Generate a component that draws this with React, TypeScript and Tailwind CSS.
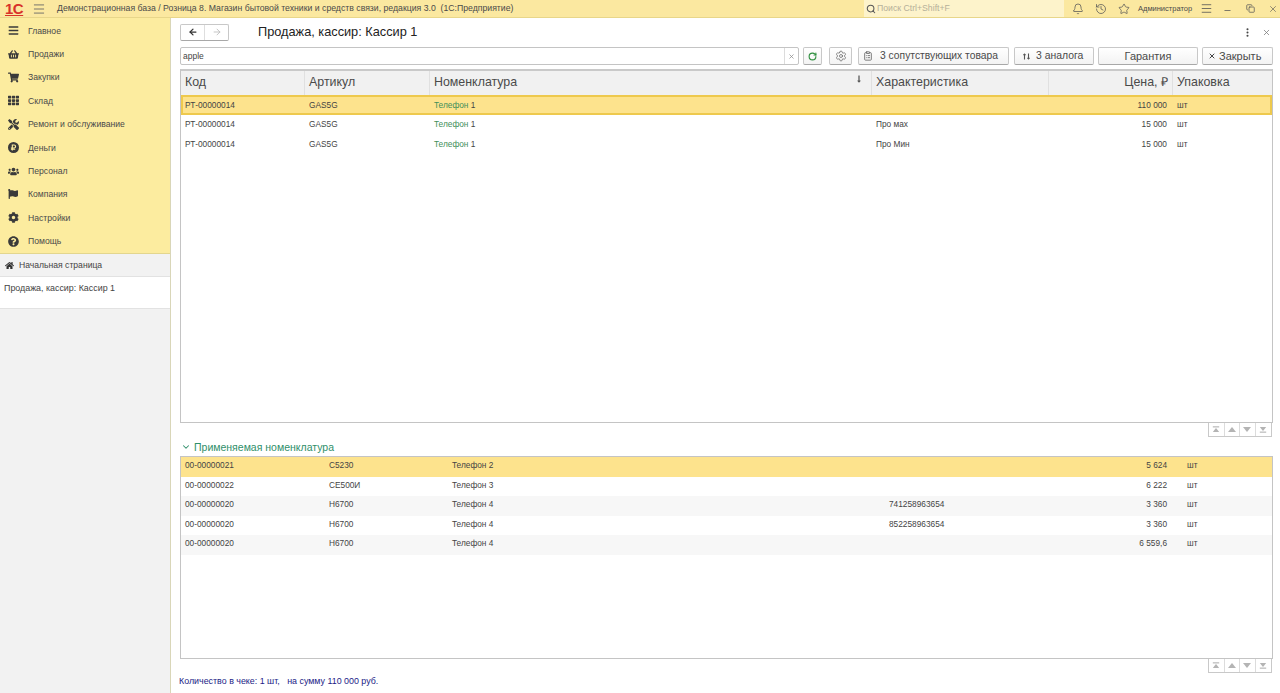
import { Bell, History, Star, Search, Menu, Minus, Copy, X, ArrowLeft, ArrowRight, RotateCw, Settings, ClipboardList, ChevronDown, EllipsisVertical } from "lucide-react"
import { FaBars, FaShoppingBasket, FaShoppingCart, FaTh, FaTools, FaRubleSign, FaUsers, FaFlag, FaCog, FaQuestionCircle, FaHome, FaLongArrowAltDown, FaLongArrowAltUp } from "react-icons/fa"

function MoneyIcon() {
  return (
    <span className="w-[11px] h-[11px] rounded-full bg-[#3a3a3a] flex items-center justify-center">
      <FaRubleSign size={7} className="text-[#fcec9f]" />
    </span>
  )
}

const menu = [
  { label: "Главное", icon: <FaBars size={11} /> },
  { label: "Продажи", icon: <FaShoppingBasket size={11} /> },
  { label: "Закупки", icon: <FaShoppingCart size={11} /> },
  { label: "Склад", icon: <FaTh size={11} /> },
  { label: "Ремонт и обслуживание", icon: <FaTools size={11} /> },
  { label: "Деньги", icon: <MoneyIcon /> },
  { label: "Персонал", icon: <FaUsers size={11} /> },
  { label: "Компания", icon: <FaFlag size={10} /> },
  { label: "Настройки", icon: <FaCog size={11} /> },
  { label: "Помощь", icon: <FaQuestionCircle size={11} /> },
]

const topRows = [
  { code: "РТ-00000014", art: "GAS5G", name: "Телефон", num: "1", ch: "", price: "110 000" },
  { code: "РТ-00000014", art: "GAS5G", name: "Телефон", num: "1", ch: "Про мах", price: "15 000" },
  { code: "РТ-00000014", art: "GAS5G", name: "Телефон", num: "1", ch: "Про Мин", price: "15 000" },
]

const bottomRows = [
  { code: "00-00000021", art: "C5230", name: "Телефон 2", ch: "", price: "5 624" },
  { code: "00-00000022", art: "CE500И", name: "Телефон 3", ch: "", price: "6 222" },
  { code: "00-00000020", art: "H6700", name: "Телефон 4", ch: "741258963654", price: "3 360" },
  { code: "00-00000020", art: "H6700", name: "Телефон 4", ch: "852258963654", price: "3 360" },
  { code: "00-00000020", art: "H6700", name: "Телефон 4", ch: "", price: "6 559,6" },
]

function Pager() {
  return (
    <div className="flex justify-end h-[15px]">
      <div className="flex h-[14px] mr-px border border-t-0 border-[#c9c9c9] divide-x divide-[#dcdcdc]">
        <span className="w-[15.5px] flex items-center justify-center">
          <svg width="8" height="7" viewBox="0 0 10 8" fill="#b4b4b4"><rect x="1" y="0" width="8" height="1.4" /><path d="M5 2 9 7H1z" /></svg>
        </span>
        <span className="w-[15.5px] flex items-center justify-center">
          <svg width="8" height="5" viewBox="0 0 10 6" fill="#b4b4b4"><path d="M5 0 10 6H0z" /></svg>
        </span>
        <span className="w-[15.5px] flex items-center justify-center">
          <svg width="8" height="5" viewBox="0 0 10 6" fill="#b4b4b4"><path d="M5 6 10 0H0z" /></svg>
        </span>
        <span className="w-[15.5px] flex items-center justify-center">
          <svg width="8" height="7" viewBox="0 0 10 8" fill="#b4b4b4"><path d="M5 6 9 1H1z" /><rect x="1" y="6.6" width="8" height="1.4" /></svg>
        </span>
      </div>
    </div>
  )
}

function Btn({ children, className }: { children: React.ReactNode; className: string }) {
  return (
    <div className={"h-[18px] shrink-0 flex items-center whitespace-nowrap rounded-[2px] border border-[#c8c8c8] border-b-[#a8a8a8] bg-gradient-to-b from-white to-[#f3f3f3] text-[#4a4a4a] " + className}>
      {children}
    </div>
  )
}

export default function App() {
  return (
    <div className="w-[1280px] h-[693px] overflow-hidden flex flex-col bg-white text-[#444] font-['Liberation_Sans',Arial,sans-serif]">
      {/* title bar */}
      <div className="h-[18px] shrink-0 flex items-center bg-[#fbe8a0] border-b border-[#e8d68a] text-[8.7px] text-[#4a4a4a]">
        <div className="w-[29px] pl-[5px] text-[15px] leading-none font-bold tracking-[-0.5px] text-[#d8322a] underline decoration-1 underline-offset-1">1С</div>
        <Menu size={14} strokeWidth={1.5} className="ml-[3px] text-[#666]" />
        <div className="ml-[11px] w-[807px] whitespace-nowrap">Демонстрационная база / Розница 8. Магазин бытовой техники и средств связи, редакция 3.0&nbsp; (1С:Предприятие)</div>
        <div className="w-[200px] h-full flex items-center gap-px pl-[2px] bg-[#fdf3cb] text-[#b5b09a]">
          <Search size={10} strokeWidth={2.5} className="text-[#555]" />
          Поиск Ctrl+Shift+F
        </div>
        <Bell size={12} strokeWidth={1.5} className="ml-[8px] text-[#555]" />
        <History size={12} strokeWidth={1.5} className="ml-[11px] text-[#555]" />
        <Star size={12} strokeWidth={1.5} className="ml-[11px] text-[#555]" />
        <div className="ml-[8px] w-[55px] text-[7.5px] whitespace-nowrap">Администратор</div>
        <Menu size={13} strokeWidth={1.5} className="ml-[7px] text-[#555]" />
        <Minus size={9} className="ml-[10px] mt-[4px] text-[#555]" />
        <Copy size={9} strokeWidth={2} className="ml-[14px] text-[#555]" />
        <X size={10} strokeWidth={1.5} className="ml-[13px] text-[#555]" />
      </div>

      <div className="flex-1 flex min-h-0">
        {/* left panel */}
        <div className="w-[171px] shrink-0 flex flex-col bg-[#f2f2f2] border-r border-[#d9d6b8]">
          <div className="h-[236px] shrink-0 flex flex-col pt-[1px] bg-[#fcec9f] border-b border-[#e3d68e] text-[8.65px] text-[#4a4a4a]">
            {menu.map(({ label, icon }) => (
              <div key={label} className="h-[23.4px] flex items-center">
                <span className="w-[28px] pl-[8px] text-[#3a3a3a] shrink-0">{icon}</span>
                <span className="whitespace-nowrap pt-[1px]">{label}</span>
              </div>
            ))}
          </div>
          <div className="h-[23px] shrink-0 flex items-center gap-[5px] pl-[5px] border-b border-[#e2e2e2] text-[8.6px] text-[#444]">
            <FaHome size={9} className="text-[#333]" />
            Начальная страница
          </div>
          <div className="h-[32px] shrink-0 pl-[4px] pt-[5px] bg-white border-b border-[#e2e2e2] text-[8.9px] text-[#444]">
            Продажа, кассир: Кассир 1
          </div>
        </div>

        {/* form */}
        <div className="flex-1 min-w-0 flex flex-col pl-[9px] pr-[7px]">
          <div className="h-[28px] shrink-0 flex items-center">
            <div className="flex w-[49px] h-[17px] rounded-[2px] border border-[#c8c8c8] border-b-[#a8a8a8]">
              <span className="flex-1 flex items-center justify-center border-r border-[#dedede]"><ArrowLeft size={10} strokeWidth={3} className="text-[#333]" /></span>
              <span className="flex-1 flex items-center justify-center"><ArrowRight size={10} strokeWidth={2} className="text-[#bbb]" /></span>
            </div>
            <div className="ml-[29px] text-[12.75px] text-[#222] whitespace-nowrap">Продажа, кассир: Кассир 1</div>
            <EllipsisVertical size={11} strokeWidth={2.5} className="ml-auto mr-[9px] text-[#444]" />
            <X size={9} className="mr-[2px] text-[#777]" />
          </div>

          <div className="h-[18px] mt-px shrink-0 flex items-center">
            <div className="w-[619px] shrink-0 h-[18px] flex items-center justify-between rounded-[2px] border border-[#c4c4c4] pl-[2px] text-[8.5px] text-[#444]">
              apple
              <span className="w-[14px] h-full flex items-center justify-center border-l border-[#dcdcdc]"><X size={7} strokeWidth={2.5} className="text-[#888]" /></span>
            </div>
            <Btn className="w-[19px] ml-[4px] justify-center"><RotateCw size={9} strokeWidth={3} className="text-[#2f8f3f]" /></Btn>
            <Btn className="w-[23px] ml-[7px] justify-center"><Settings size={12} strokeWidth={1.5} className="text-[#666]" /></Btn>
            <Btn className="w-[151px] ml-[6px] pl-[4px] gap-[7px] text-[10.3px]"><ClipboardList size={10} className="text-[#666]" />3 сопутствующих товара</Btn>
            <Btn className="w-[80px] ml-[5px] pl-[6px] gap-[4px] text-[10.4px]"><span className="flex"><FaLongArrowAltUp size={7} className="text-[#555]" /><FaLongArrowAltDown size={7} className="-ml-[3px] text-[#555]" /></span>3 аналога</Btn>
            <Btn className="w-[100px] ml-[4px] justify-center text-[11px]">Гарантия</Btn>
            <Btn className="w-[71px] ml-[4px] pl-[5px] gap-[3px] text-[11px]"><X size={8} strokeWidth={3} className="text-[#444]" />Закрыть</Btn>
          </div>

          {/* upper list */}
          <div className="h-[354px] mt-[4px] shrink-0 border border-[#c4c4c4] border-t-2 border-t-[#c9c9c9] text-[8.3px]">
            <div className="h-[24px] flex bg-[#f1f1f1] text-[12.4px] text-[#4a4a4a]">
              <div className="w-[124px] flex items-center pl-[4px] pb-[2px] border-r border-[#e0e0e0]">Код</div>
              <div className="w-[125px] flex items-center pl-[4px] pb-[2px] border-r border-[#e0e0e0]">Артикул</div>
              <div className="w-[442px] flex items-center justify-between pl-[4px] pr-[8px] pb-[2px] border-r border-[#e0e0e0]">Номенклатура<FaLongArrowAltDown size={8} className="mb-[7px] text-[#555]" /></div>
              <div className="w-[177px] flex items-center pl-[4px] pb-[2px] border-r border-[#e0e0e0]">Характеристика</div>
              <div className="w-[124px] flex items-center justify-end pr-[4px] pb-[2px] border-r border-[#e0e0e0]">Цена, ₽</div>
              <div className="flex-1 flex items-center pl-[4px] pb-[2px]">Упаковка</div>
            </div>
            {topRows.map((r, i) => (
              <div key={i} className={i === 0 ? "h-[19.5px] flex items-center bg-[#fde38d] outline-2 -outline-offset-2 outline-[#eec94d]" : "h-[19.5px] flex items-center"}>
                <div className="w-[124px] pl-[4px]">{r.code}</div>
                <div className="w-[125px] pl-[4px]">{r.art}</div>
                <div className="w-[442px] pl-[4px]"><span className="text-[#3f8f5a]">{r.name}</span> {r.num}</div>
                <div className="w-[177px] pl-[4px]">{r.ch}</div>
                <div className="w-[118px] text-right">{r.price}</div>
                <div className="pl-[10px]">шт</div>
              </div>
            ))}
          </div>
          <Pager />

          <div className="h-[18px] shrink-0 flex items-start gap-[3px] pt-[2px] text-[10.5px] leading-[14px] text-[#2f8f6a]">
            <ChevronDown size={10} strokeWidth={2.5} className="mt-[2px] ml-[1px]" />
            Применяемая номенклатура
          </div>

          {/* lower list */}
          <div className="h-[203px] shrink-0 border border-[#c4c4c4] text-[8.3px]">
            {bottomRows.map((r, i) => (
              <div key={i} className={"h-[19.5px] flex items-center pb-[3px] " + (i === 0 ? "bg-[#fde38d]" : i % 2 === 0 ? "bg-[#f7f7f7]" : "")}>
                <div className="w-[144px] pl-[4px]">{r.code}</div>
                <div className="w-[123px] pl-[4px]">{r.art}</div>
                <div className="w-[437px] pl-[4px]">{r.name}</div>
                <div className="w-[165px] pl-[4px]">{r.ch}</div>
                <div className="w-[117px] text-right">{r.price}</div>
                <div className="pl-[20px]">шт</div>
              </div>
            ))}
          </div>
          <Pager />

          <div className="mt-[1px] -ml-px text-[8.9px] text-[#1c1c86] whitespace-pre">Количество в чеке: 1 шт,   на сумму 110 000 руб.</div>
        </div>
      </div>
    </div>
  )
}
